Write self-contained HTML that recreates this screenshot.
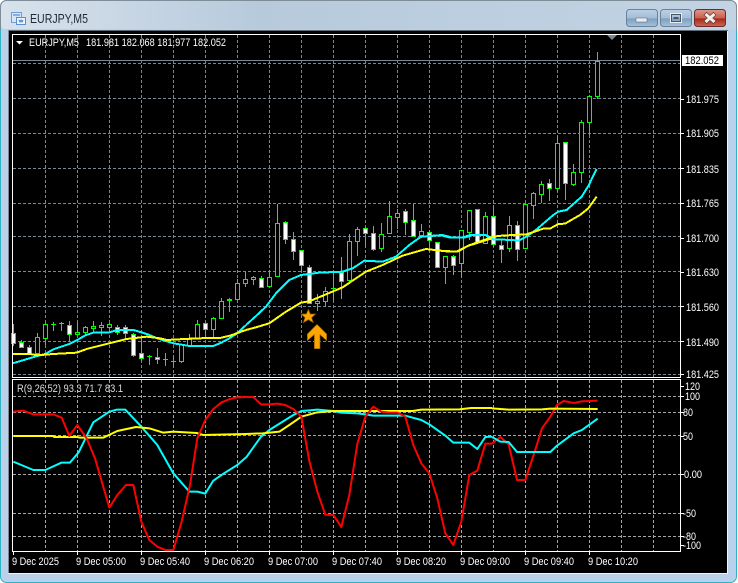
<!DOCTYPE html>
<html><head><meta charset="utf-8"><style>
html,body{margin:0;padding:0;background:#fff;width:738px;height:583px;overflow:hidden}
svg{display:block}
text{font-family:"Liberation Sans",sans-serif;font-size:11px;fill:#fff}
.g{stroke:#778899;stroke-width:1;stroke-dasharray:3 2;fill:none;shape-rendering:crispEdges}
.s{stroke:#a6a6a6;stroke-width:1;stroke-dasharray:3 2;fill:none;shape-rendering:crispEdges}
.h rect{width:4px;fill:#000;stroke:#0f0;stroke-width:1;shape-rendering:crispEdges}
.w rect{width:4px;fill:#fff;stroke:#0f0;stroke-width:1;shape-rendering:crispEdges}
polyline{fill:none;stroke-linejoin:round}
</style></head><body>
<svg width="738" height="583" viewBox="0 0 738 583" xmlns="http://www.w3.org/2000/svg">
<defs>
<linearGradient id="tl" x1="0" y1="0" x2="1" y2="0"><stop offset="0" stop-color="#d8e2ec"/><stop offset=".35" stop-color="#b7cadc"/><stop offset="1" stop-color="#c2d3e3"/></linearGradient>
<linearGradient id="bt" x1="0" y1="0" x2="0" y2="1"><stop offset="0" stop-color="#bcd0e6"/><stop offset=".5" stop-color="#a3bdd8"/><stop offset=".55" stop-color="#7f9fc0"/><stop offset="1" stop-color="#a5c2dd"/></linearGradient>
<linearGradient id="cl" x1="0" y1="0" x2="0" y2="1"><stop offset="0" stop-color="#dd9a8c"/><stop offset=".5" stop-color="#c8604f"/><stop offset=".55" stop-color="#a8281a"/><stop offset="1" stop-color="#c96a52"/></linearGradient>
</defs>
<rect x="0" y="0" width="738" height="583" fill="#fff"/>
<rect x="0.5" y="0.5" width="736" height="582" rx="6" fill="#b9d1ea" stroke="#2fb3c4"/>
<rect x="1" y="1" width="735" height="29" rx="5" fill="url(#tl)"/>
<path d="M0.5 30V6.5a6 6 0 0 1 6-6H730.5a6 6 0 0 1 6 6V30" fill="none" stroke="#7f8d99"/>
<rect x="1" y="29" width="735" height="1" fill="#b9d1ea"/>
<!-- client -->
<rect x="8" y="30" width="720" height="544" fill="#000"/>
<rect x="8" y="30" width="720" height="1" fill="#5e6a75"/>
<rect x="8" y="30" width="1" height="544" fill="#7d8a96"/>
<rect x="727" y="31" width="1" height="543" fill="#f0f4f8"/>
<rect x="8" y="573" width="720" height="1" fill="#f0f4f8"/>
<!-- title icon -->
<g shape-rendering="crispEdges">
<rect x="11.5" y="12.5" width="10" height="10" fill="#d5e6f7" stroke="#6ea0d8"/>
<rect x="16.5" y="17.5" width="9" height="7" fill="#eaf3fc" stroke="#5a8fd0"/>
<path d="M13 15h7M19 20l1 2 1-2 1 2 1-2" stroke="#3f78c0" fill="none"/>
</g>
<text x="30" y="23" style="font-size:13px;fill:#1f2a36" textLength="58" lengthAdjust="spacingAndGlyphs">EURJPY,M5</text>
<!-- buttons -->
<rect x="626.5" y="9.5" width="31" height="17" rx="3" fill="url(#bt)" stroke="#6a8197"/>
<rect x="636" y="18" width="11" height="4" fill="#e8edf2" stroke="#55606c" stroke-width=".5"/>
<rect x="660.5" y="9.5" width="31" height="17" rx="3" fill="url(#bt)" stroke="#6a8197"/>
<rect x="670.5" y="13.5" width="11" height="9" fill="none" stroke="#e8edf2" stroke-width="1"/>
<rect x="671.5" y="14.5" width="9" height="7" fill="none" stroke="#4a5560" stroke-width="1"/>
<rect x="673.5" y="17" width="5" height="2" fill="#4a5560"/>
<rect x="694.5" y="9.5" width="31" height="17" rx="3" fill="url(#cl)" stroke="#6e2a2a"/>
<path d="M705 13.5l10 9M715 13.5l-10 9" stroke="#5c3a36" stroke-width="4.4"/>
<path d="M705.5 14l9 8M714.5 14l-9 8" stroke="#f1eeec" stroke-width="3"/>

<!-- grid main -->
<path class="g" d="M13 63.5H681M13 98.5H681M13 133.5H681M13 168.5H681M13 203.5H681M13 236.5H681M13 271.5H681M13 306.5H681M13 341.5H681M13 374.5H681"/>
<path class="g" d="M45.5 35V377M77.5 35V377M109.5 35V377M141.5 35V377M173.5 35V377M205.5 35V377M237.5 35V377M269.5 35V377M301.5 35V377M333.5 35V377M365.5 35V377M397.5 35V377M429.5 35V377M461.5 35V377M493.5 35V377M525.5 35V377M557.5 35V377M589.5 35V377M621.5 35V377M653.5 35V377"/>
<!-- grid sub -->
<path class="s" d="M13 396.5H681M13 412.5H681M13 435.5H681M13 474.5H681M13 513.5H681M13 536.5H681"/>
<path class="s" d="M45.5 380V552M77.5 380V552M109.5 380V552M141.5 380V552M173.5 380V552M205.5 380V552M237.5 380V552M269.5 380V552M301.5 380V552M333.5 380V552M365.5 380V552M397.5 380V552M429.5 380V552M461.5 380V552M493.5 380V552M525.5 380V552M557.5 380V552M589.5 380V552M621.5 380V552M653.5 380V552"/>
<!-- price line -->
<rect x="13" y="60" width="668" height="1" fill="#778899"/>

<!-- wicks -->
<path shape-rendering="crispEdges" stroke="#00ff00" fill="none" d="M13.5 324V346M21.5 340V348M29.5 345V355M37.5 333V355M45.5 322V345M53.5 322V331M61.5 322V331M69.5 321V342M77.5 322V335M85.5 326V335M93.5 321V332M101.5 322V336M109.5 323V330M117.5 325V335M125.5 325V340M133.5 333V357M141.5 337V361M149.5 355V365M157.5 348V364M165.5 353V366M173.5 356V367M181.5 344V363M189.5 334V345M197.5 320V339M205.5 322V338M213.5 317V338M221.5 298V318M229.5 298V312M237.5 279V301M245.5 272V287M253.5 276V285M261.5 276V288M269.5 270V287M277.5 204V277M285.5 221V244M293.5 232V260M301.5 250V272M309.5 265V303M317.5 294V311M325.5 287V307M333.5 273V301M341.5 257V299M349.5 234V283M357.5 227V256M365.5 227V247M373.5 226V251M381.5 223V252M389.5 201V234M397.5 209V229M405.5 209V235M413.5 204V237M421.5 224V238M429.5 230V250M437.5 242V268M445.5 256V284M453.5 255V275M461.5 230V278M469.5 210V240M477.5 209V242M485.5 212V244M493.5 205V247M501.5 240V263M509.5 216V252M517.5 221V261M525.5 204V248M533.5 192V219M541.5 181V203M549.5 179V201M557.5 136V192M565.5 142V200M573.5 164V186M581.5 120V183M589.5 95V135M597.5 52V99"/>
<path shape-rendering="crispEdges" stroke="#00ff00" fill="none" d="M51 324.5h5M59 323.5h5M147 356.5h5M163 359.5h5M171 361.5h5M331 288.5h5"/>
<!-- hollow -->
<g class="h">
<rect x="35.5" y="337.5" height="16"/><rect x="43.5" y="324.5" height="14"/><rect x="75.5" y="332.5" height="2"/><rect x="83.5" y="327.5" height="5"/><rect x="91.5" y="326.5" height="2"/><rect x="99.5" y="325.5" height="2"/><rect x="107.5" y="324.5" height="3"/>
<rect x="179.5" y="344.5" height="17"/><rect x="187.5" y="339.5" height="6"/><rect x="195.5" y="324.5" height="14"/><rect x="211.5" y="318.5" height="11"/><rect x="219.5" y="301.5" height="17"/><rect x="227.5" y="299.5" height="1"/><rect x="235.5" y="283.5" height="16"/><rect x="243.5" y="279.5" height="4"/><rect x="251.5" y="277.5" height="2"/><rect x="267.5" y="277.5" height="9"/><rect x="275.5" y="223.5" height="53"/>
<rect x="315.5" y="301.5" height="2"/><rect x="323.5" y="291.5" height="10"/><rect x="347.5" y="241.5" height="39"/><rect x="355.5" y="229.5" height="12"/><rect x="379.5" y="234.5" height="14"/><rect x="387.5" y="216.5" height="17"/><rect x="395.5" y="213.5" height="4"/><rect x="419.5" y="231.5" height="4"/>
<rect x="443.5" y="256.5" height="11"/><rect x="459.5" y="230.5" height="33"/><rect x="467.5" y="210.5" height="22"/><rect x="483.5" y="216.5" height="27"/><rect x="507.5" y="225.5" height="23"/><rect x="523.5" y="204.5" height="44"/><rect x="531.5" y="193.5" height="12"/><rect x="539.5" y="184.5" height="10"/><rect x="555.5" y="143.5" height="45"/><rect x="571.5" y="172.5" height="12"/><rect x="579.5" y="122.5" height="50"/><rect x="587.5" y="96.5" height="26"/><rect x="595.5" y="61.5" height="35"/>
</g>
<!-- filled -->
<g class="w">
<rect x="11.5" y="333.5" height="10"/><rect x="19.5" y="342.5" height="5"/><rect x="27.5" y="347.5" height="6"/><rect x="67.5" y="325.5" height="9"/><rect x="115.5" y="327.5" height="5"/><rect x="123.5" y="327.5" height="6"/><rect x="131.5" y="334.5" height="21"/><rect x="139.5" y="353.5" height="5"/><rect x="155.5" y="357.5" height="2"/><rect x="203.5" y="323.5" height="6"/>
<rect x="259.5" y="278.5" height="9"/><rect x="283.5" y="222.5" height="17"/><rect x="291.5" y="239.5" height="12"/><rect x="299.5" y="250.5" height="15"/><rect x="307.5" y="267.5" height="36"/><rect x="339.5" y="272.5" height="9"/><rect x="363.5" y="228.5" height="5"/><rect x="371.5" y="233.5" height="16"/><rect x="403.5" y="211.5" height="11"/><rect x="411.5" y="220.5" height="16"/><rect x="427.5" y="232.5" height="8"/><rect x="435.5" y="242.5" height="25"/><rect x="451.5" y="256.5" height="9"/><rect x="475.5" y="209.5" height="33"/><rect x="491.5" y="216.5" height="28"/><rect x="499.5" y="245.5" height="4"/><rect x="515.5" y="225.5" height="24"/><rect x="547.5" y="183.5" height="5"/><rect x="563.5" y="142.5" height="41"/>
</g>
<!-- main MAs -->
<g shape-rendering="crispEdges">
<g transform="translate(0,270) scale(.3333)">
<polyline stroke="#0ff" stroke-width="6" points="38,280 112,258 136,252 160,238 208,222 232,210 256,196 280,188 328,187 352,180 400,180 424,187 448,195 472,205 520,220 568,228 640,228 664,218 688,205 712,190 738,165"/>
</g>
<g transform="translate(246,190) scale(.3333)">
<polyline stroke="#0ff" stroke-width="6" points="0,405 30,378 60,350 90,310 130,270 165,255 220,248 290,245 320,235 355,212 410,215 450,200 490,165 525,140 590,135 620,143 655,143 680,135 720,135 738,145"/>
</g>
<g transform="translate(440,100) scale(.3333)">
<polyline stroke="#0ff" stroke-width="6" points="0,405 30,413 65,413 90,405 135,405 160,418 215,420 235,422 260,410 290,388 340,345 355,335 380,330 425,290 445,258 470,207"/>
</g>
<g transform="translate(0,270) scale(.3333)">
<polyline stroke="#ff0" stroke-width="6" points="38,252 90,252 112,256 160,252 230,248 260,237 320,222 380,207 440,200 480,205 500,210 590,205 660,204 690,197 738,180"/>
</g>
<g transform="translate(246,190) scale(.3333)">
<polyline stroke="#ff0" stroke-width="6" points="0,420 30,412 70,400 120,365 165,338 190,334 290,292 360,245 410,225 470,197 540,177 600,184 635,185 665,168 738,145"/>
</g>
<g transform="translate(440,100) scale(.3333)">
<polyline stroke="#ff0" stroke-width="6" points="0,452 50,455 90,435 160,410 185,407 260,403 310,386 330,386 355,372 375,371 420,345 445,325 470,290"/>
</g>
</g>
<!-- arrow and star -->
<g transform="translate(246,190) scale(.3333)">
<polygon points="187,358 193,372 209,372 197,383 202,398 187,389 172,398 177,383 165,372 181,372" fill="#ffa500" stroke="#8a5a00" stroke-width="2"/>
<polygon points="213,403 242,432 242,452 222,434 222,476 205,476 205,434 184,452 184,432" fill="#ffa500" stroke="#8a5a00" stroke-width="2"/>
</g>
<!-- sub lines -->
<g transform="translate(0,375) scale(.3333)">
<polyline stroke="#0ff" stroke-width="6" points="40,260 64,270 100,285 136,285 184,263 210,263 236,232 280,142 328,110 350,104 376,104 424,155 472,210 520,295 568,350 592,350 616,356 640,317 672,295 712,270 738,247"/>
<polyline stroke="#ff0" stroke-width="6" points="40,183 160,183 162,186 232,186 240,188 310,188 352,168 408,156 448,160 490,173 520,170 590,174 610,180 738,177"/>
<polyline stroke="#f00" stroke-width="6" points="40,110 70,107 100,118 160,118 185,128 208,183 232,150 260,190 285,250 328,398 352,360 378,330 400,330 424,440 448,495 472,515 496,525 520,525 545,440 570,330 592,190 616,135 640,102 665,82 690,72 712,67 738,66"/>
</g>
<g transform="translate(246,375) scale(.3333)">
<polyline stroke="#0ff" stroke-width="6" points="0,248 45,185 70,165 94,150 118,135 142,120 166,108 190,106 214,104 262,108 286,113 334,115 358,118 382,122 478,122 526,135 550,148 598,182 622,203 670,203 694,222 718,186 738,185"/>
<polyline stroke="#ff0" stroke-width="6" points="0,177 50,175 100,170 130,150 166,125 214,112 262,108 500,108 526,104 640,103 675,99 738,99"/>
<polyline stroke="#f00" stroke-width="6" points="0,66 22,66 45,88 70,88 94,86 118,90 142,102 166,125 190,258 214,350 238,419 262,420 286,456 310,360 334,207 358,125 382,95 406,110 430,113 454,113 478,125 502,210 526,265 550,295 574,370 598,475 622,510 646,440 670,300 694,287 718,206 738,206"/>
</g>
<g transform="translate(492,375) scale(.3333)">
<polyline stroke="#f00" stroke-width="6" points="0,206 25,186 50,208 75,315 100,315 125,240 150,160 175,125 195,90 215,78 245,84 270,79 317,77"/>
<polyline stroke="#0ff" stroke-width="6" points="0,186 25,200 50,201 75,231 175,231 195,212 245,175 270,165 317,131"/>
<polyline stroke="#ff0" stroke-width="6" points="0,100 50,104 150,103 175,101 317,102"/>
</g>

<!-- frames -->
<g shape-rendering="crispEdges" fill="none" stroke="#fff">
<rect x="12.5" y="34.5" width="668" height="343"/>
<rect x="12.5" y="379.5" width="668" height="172"/>
<path d="M681 99.5h3M681 133.5h3M681 168.5h3M681 203.5h3M681 238.5h3M681 272.5h3M681 306.5h3M681 341.5h3M681 374.5h3M681 386.5h3M681 396.5h3M681 412.5h3M681 436.5h3M681 474.5h3M681 513.5h3M681 536.5h3M681 545.5h3"/>
<path d="M13.5 552v3M77.5 552v3M141.5 552v3M205.5 552v3M269.5 552v3M333.5 552v3M397.5 552v3M461.5 552v3M525.5 552v3M589.5 552v3"/>
</g>
<polygon points="607,35 617,35 612,40" fill="#778899"/>
<polygon points="16,41 23,41 19.5,44.5" fill="#fff"/>

<!-- header text -->
<text x="29" y="46" textLength="50" lengthAdjust="spacingAndGlyphs">EURJPY,M5</text>
<text x="86" y="46" textLength="140" lengthAdjust="spacingAndGlyphs">181.981 182.068 181.977 182.052</text>
<text x="17" y="392" style="fill:#ddd" textLength="106" lengthAdjust="spacingAndGlyphs">R(9,26,52) 93.3 71.7 83.1</text>

<!-- price axis -->
<rect x="682" y="55" width="41" height="11" fill="#fff"/>
<text x="685" y="64" style="fill:#000" textLength="34" lengthAdjust="spacingAndGlyphs">182.052</text>
<g>
<text x="686" y="103" textLength="33" lengthAdjust="spacingAndGlyphs">181.975</text>
<text x="686" y="137" textLength="33" lengthAdjust="spacingAndGlyphs">181.905</text>
<text x="686" y="173" textLength="33" lengthAdjust="spacingAndGlyphs">181.835</text>
<text x="686" y="207" textLength="33" lengthAdjust="spacingAndGlyphs">181.765</text>
<text x="686" y="242" textLength="33" lengthAdjust="spacingAndGlyphs">181.700</text>
<text x="686" y="276" textLength="33" lengthAdjust="spacingAndGlyphs">181.630</text>
<text x="686" y="311" textLength="33" lengthAdjust="spacingAndGlyphs">181.560</text>
<text x="686" y="346" textLength="33" lengthAdjust="spacingAndGlyphs">181.490</text>
<text x="686" y="378" textLength="33" lengthAdjust="spacingAndGlyphs">181.425</text>
<text x="685" y="390" textLength="15" lengthAdjust="spacingAndGlyphs">120</text>
<text x="685" y="400" textLength="15" lengthAdjust="spacingAndGlyphs">100</text>
<text x="683" y="416" textLength="10" lengthAdjust="spacingAndGlyphs">80</text>
<text x="683" y="440" textLength="10" lengthAdjust="spacingAndGlyphs">50</text>
<text x="684" y="478" textLength="18" lengthAdjust="spacingAndGlyphs">0.00</text>
<text x="683" y="517" textLength="13" lengthAdjust="spacingAndGlyphs">-50</text>
<text x="683" y="540" textLength="13" lengthAdjust="spacingAndGlyphs">-80</text>
<text x="683" y="549" textLength="18" lengthAdjust="spacingAndGlyphs">-100</text>
</g>
<!-- time axis -->
<g>
<text x="12" y="565" textLength="47" lengthAdjust="spacingAndGlyphs">9 Dec 2025</text>
<text x="76" y="565" textLength="50" lengthAdjust="spacingAndGlyphs">9 Dec 05:00</text>
<text x="140" y="565" textLength="50" lengthAdjust="spacingAndGlyphs">9 Dec 05:40</text>
<text x="204" y="565" textLength="50" lengthAdjust="spacingAndGlyphs">9 Dec 06:20</text>
<text x="268" y="565" textLength="50" lengthAdjust="spacingAndGlyphs">9 Dec 07:00</text>
<text x="332" y="565" textLength="50" lengthAdjust="spacingAndGlyphs">9 Dec 07:40</text>
<text x="396" y="565" textLength="50" lengthAdjust="spacingAndGlyphs">9 Dec 08:20</text>
<text x="460" y="565" textLength="50" lengthAdjust="spacingAndGlyphs">9 Dec 09:00</text>
<text x="524" y="565" textLength="50" lengthAdjust="spacingAndGlyphs">9 Dec 09:40</text>
<text x="588" y="565" textLength="50" lengthAdjust="spacingAndGlyphs">9 Dec 10:20</text>
</g>
</svg>
</body></html>
